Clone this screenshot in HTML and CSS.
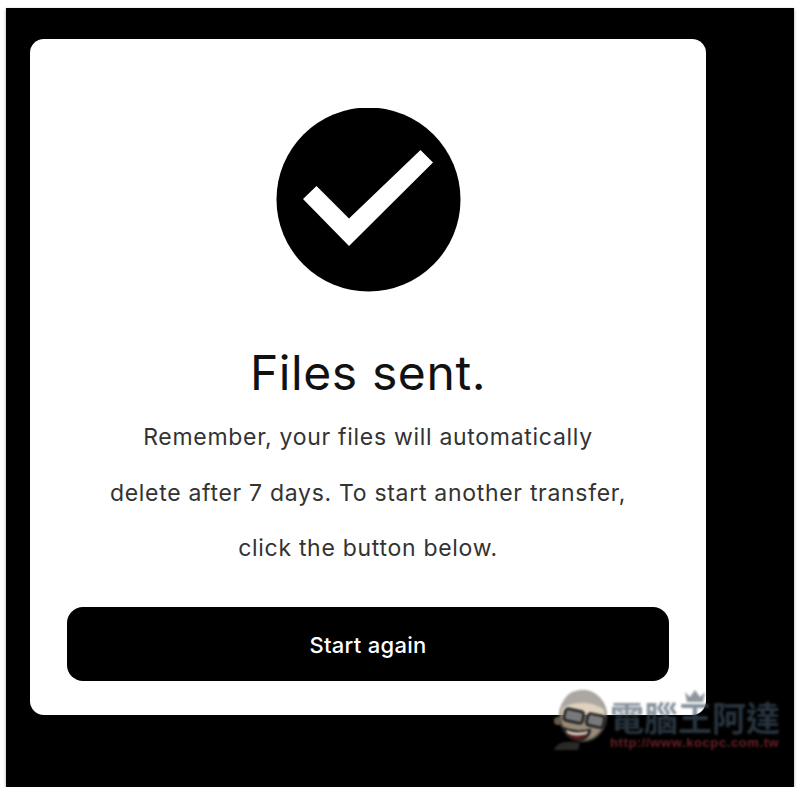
FILE: index.html
```html
<!DOCTYPE html>
<html>
<head>
  <meta charset="utf-8">
  <title>Files sent</title>
  <link rel="stylesheet" href="styles.css">
</head>
<body>
  <div class="frame">
    <div class="card">
      <svg class="check" width="186" height="185" viewBox="0 0 186 185">
        <circle cx="93.500" cy="91.500" r="92" fill="#000"/>
        <polygon points="28,91 41.500,78 74,110.500 145.500,42 158,54.500 74,138" fill="#fff"/>
      </svg>
      <h1>Files sent.</h1>
      <p class="message">Remember, your files will automatically<br>delete after 7 days. To start another transfer,<br>click the button below.</p>
      <button class="again">Start again</button>
    </div>
  </div>

  <!-- watermark over the corner -->
  <div class="mark">
    <svg class="mark-face" width="58" height="62" viewBox="0 0 58 62">
      <g opacity="0.72">
        <ellipse cx="31" cy="28" rx="23" ry="25" fill="#d3bfa5" stroke="#6b665e" stroke-width="2"/>
        <path d="M9 21 C12 5 22 1 33 3 C42 4 50 10 53 22 C40 13 22 12 9 21Z" fill="#8b867e"/>
        <circle cx="6" cy="33" r="4" fill="#8d7e69"/>
        <path d="M2 62 C5 54 14 52 28 55 L26 62Z" fill="#3a3a36"/>
      </g>
      <g transform="rotate(12 31 31)">
        <rect x="12" y="24" width="19" height="12" rx="3" fill="#77797b" stroke="#1e1e1e" stroke-width="2.500"/>
        <rect x="35" y="24" width="17" height="12" rx="3" fill="#77797b" stroke="#1e1e1e" stroke-width="2.500"/>
      </g>
      <path d="M11 40 C20 44 30 44 38 42 C37 55 16 57 11 40Z" fill="#5a1f1a" stroke="#1e1e1e" stroke-width="2"/>
      <path d="M14 42 C20 45 30 45 36 43 L35 46 C28 48 20 48 15 45Z" fill="#d8d2c8"/>
    </svg>
    <div class="mark-text">
      <svg class="mark-crown" width="24" height="14" viewBox="0 0 24 14">
        <path d="M2 3 L7 8 L12 1 L17 8 L22 3 L20 13 L4 13Z" fill="#8f979e"/>
      </svg>
      <div class="mark-name">電腦王阿達</div>
      <div class="mark-url">http://www.kocpc.com.tw</div>
    </div>
  </div>
</body>
</html>
```

FILE: styles.css
```css
body {
  margin: 0;
  background: #fff;
  font-family: Inter, "Liberation Sans", sans-serif;
}
.frame {
  margin: 8px 6px 0;
  height: 779px;
  padding: 31px 24px 0;
  box-sizing: border-box;
  background: #000;
  box-shadow: 0 1px 3px rgba(0,0,0,0.35);
}
.card {
  width: 676px;
  height: 676px;
  padding: 69px 37px 0;
  box-sizing: border-box;
  background: #fff;
  border-radius: 14px;
  display: flex;
  flex-direction: column;
  align-items: center;
}
.check {
  flex: none;
}
h1 {
  margin: 50px 0 0;
  font-size: 48px;
  line-height: 60px;
  font-weight: 400;
  letter-spacing: 0.600px;
  color: #111;
}
.message {
  margin: 7px 0 0;
  font-size: 23px;
  line-height: 55.500px;
  letter-spacing: 0.700px;
  text-align: center;
  color: #333;
}
.again {
  width: 602px;
  height: 74px;
  margin-top: 30px;
  padding-top: 4px;
  border: none;
  border-radius: 16px;
  background: #000;
  color: #fff;
  font-family: inherit;
  font-size: 22px;
  font-weight: 500;
  letter-spacing: 0.300px;
}
.mark {
  position: absolute;
  left: 552px;
  top: 688px;
  display: flex;
  align-items: flex-start;
  filter: blur(0.9px);
}
.mark-text {
  position: relative;
  margin-top: 10px;
}
.mark-crown {
  position: absolute;
  left: 73px;
  top: -9px;
}
.mark-name {
  font-family: "Noto Sans CJK TC", sans-serif;
  font-size: 34px;
  line-height: 38px;
  font-weight: 700;
  color: rgba(63,82,99,0.62);
}
.mark-url {
  font-family: "Liberation Sans", sans-serif;
  font-size: 13px;
  line-height: 14px;
  font-weight: 700;
  letter-spacing: 0.600px;
  color: #6a2026;
}
```
